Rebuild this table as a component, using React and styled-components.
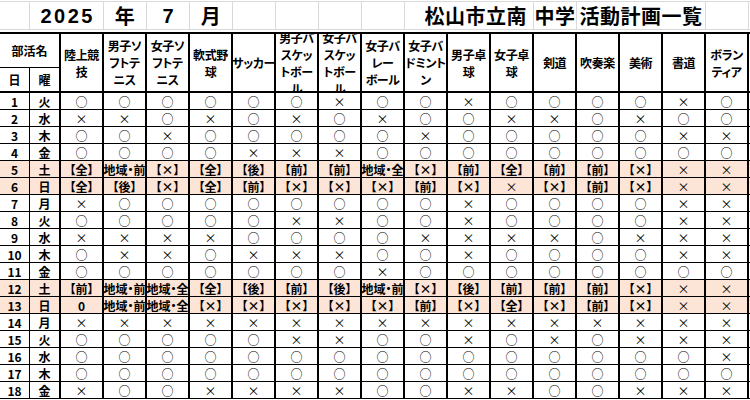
import React from 'react';
import styled, { createGlobalStyle, css } from 'styled-components';

const COLS = '30px 31px repeat(16, 43px)';

const clubs = [
  ['陸上競', '技'],
  ['男子ソ', 'フトテ', 'ニス'],
  ['女子ソ', 'フトテ', 'ニス'],
  ['軟式野', '球'],
  ['サッカー'],
  ['男子バ', 'スケッ', 'トボー', 'ル'],
  ['女子バ', 'スケッ', 'トボー', 'ル'],
  ['女子バ', 'レー', 'ボール'],
  ['女子バ', 'ドミント', 'ン'],
  ['男子卓', '球'],
  ['女子卓', '球'],
  ['剣道'],
  ['吹奏楽'],
  ['美術'],
  ['書道'],
  ['ボラン', 'ティア'],
];

const rows = [
  [1, '火', 'o o o o o o x o o x o o o o x o'],
  [2, '水', 'x x o x o x o x o o x x o x o o'],
  [3, '木', 'o o x o o o o o x o o o o o x x'],
  [4, '金', 'o o o o x x x o o o o o o o o o'],
  [5, '土', '【全】 地域・前 【×】 【全】 【後】 【前】 【前】 地域・全 【×】 【前】 【全】 【前】 【前】 【×】 x x'],
  [6, '日', '【全】 【後】 【×】 【全】 【前】 【×】 【×】 【×】 【前】 【×】 x 【×】 【前】 【×】 x x'],
  [7, '月', 'x o o o o o o o o x o o o o x x'],
  [8, '火', 'o o o o o x x o o x o o o o x x'],
  [9, '水', 'x x x x o o o o x x x x o x x x'],
  [10, '木', 'o x x o x x x o o x o o o o x x'],
  [11, '金', 'o o o o o o o x o o o o o o o o'],
  [12, '土', '【前】 地域・前 地域・全 【全】 【後】 【前】 【後】 地域・前 【×】 【後】 【前】 【前】 【前】 【×】 x x'],
  [13, '日', '0 地域・前 地域・全 【×】 【×】 【×】 【×】 【×】 【前】 【×】 【全】 【×】 【前】 【×】 x x'],
  [14, '月', 'x x x x x x x x x x x x x x x x'],
  [15, '火', 'o o o o o x x o o x o x o x x x'],
  [16, '水', 'o o o o o o o o o o o o o o o x'],
  [17, '木', 'o o o o o o o o o o o o o o o o'],
  [18, '金', 'x o o x x x x o o x x o o x x x'],
];

const weekend = ['土', '日'];

// o / x are the plain marks, anything else is written as is
const markOf = (t) => (t === 'o' ? '○' : t === 'x' ? '×' : t);

const App = () => {
  return (
    <Sheet>
      <GlobalStyle />
      <TitleRow>
        <TitleCell />
        <TitleCell $span={2}><Year>2025</Year></TitleCell>
        <TitleCell><BigText>年</BigText></TitleCell>
        <TitleCell><Year>7</Year></TitleCell>
        <TitleCell><BigText>月</BigText></TitleCell>
        <TitleCell />
        <TitleCell />
        <TitleCell />
        <TitleCell />
        <TitleCell $span={3} $align="flex-end"><BigText>松山市立南</BigText></TitleCell>
        <TitleCell><BigText>中学</BigText></TitleCell>
        <TitleCell $span={3}><BigText>活動計画一覧</BigText></TitleCell>
        <TitleCell />
      </TitleRow>

      <Table>
        <Header>
          <HeadCell $span={2} $under>部活名</HeadCell>
          {clubs.map((lines, i) => (
            <ClubHead key={i}>
              {lines.map((l, j) => <span key={j}>{l}</span>)}
            </ClubHead>
          ))}
          <HeadCell $thin>日</HeadCell>
          <HeadCell>曜</HeadCell>
        </Header>

        {rows.map(([day, wd, marks]) => (
          <Row key={day} $shaded={weekend.includes(wd)}>
            <DayCell $thin>{day}</DayCell>
            <DayCell>{wd}</DayCell>
            {marks.split(' ').map((t, i) => (
              <MarkCell key={i} $plain={t === 'o' || t === 'x'}>{markOf(t)}</MarkCell>
            ))}
          </Row>
        ))}
      </Table>
    </Sheet>
  );
};

export default App;

const GlobalStyle = createGlobalStyle`
  html, body {
    margin: 0;
    padding: 0;
    background: #ffffff;
  }
  body {
    font-family: "Noto Sans CJK JP", "Noto Sans", sans-serif;
    font-feature-settings: "palt";
    color: #000000;
  }
`;

const Sheet = styled.div`
  width: 750px;
  height: 400px;
  overflow: hidden;
  padding-top: 1px;
  box-sizing: border-box;
`;

const TitleRow = styled.div`
  display: grid;
  grid-template-columns: ${COLS};
  height: 29px;
  box-sizing: border-box;
  border-top: 1px solid #d9d9d9;
  border-bottom: 1px solid #d9d9d9;
`;

const TitleCell = styled.div`
  grid-column: span ${props => props.$span || 1};
  display: flex;
  align-items: center;
  justify-content: ${props => props.$align || 'center'};
  padding-right: ${props => (props.$align ? '6px' : '0')};
  border-right: 1px solid #d9d9d9;
  white-space: nowrap;
`;

const Year = styled.span`
  font-family: "Liberation Sans", Arial, sans-serif;
  font-weight: 700;
  font-size: 20px;
  line-height: 20px;
  letter-spacing: 2.5px;
  margin-right: -2.5px;
`;

const BigText = styled.span`
  font-weight: 700;
  font-size: 20px;
  line-height: 20px;
  letter-spacing: 0.5px;
`;

const Table = styled.div`
  margin-top: 2px;
`;

const Header = styled.div`
  display: grid;
  grid-template-columns: ${COLS};
  grid-template-rows: 34px 23px;
  grid-auto-flow: column dense;
  border-top: 2px solid #000;
  border-bottom: 2px solid #000;
`;

const HeadCell = styled.div`
  grid-column: span ${props => props.$span || 1};
  display: flex;
  align-items: center;
  justify-content: center;
  font-size: 12px;
  line-height: 14px;
  font-weight: 700;
  border-right: ${props => (props.$thin ? '1px' : '2px')} solid #000;
  box-sizing: border-box;

  ${props => props.$under && css`
    grid-row: 1;
    border-bottom: 1px solid #000;
  `}
`;

const ClubHead = styled.div`
  grid-row: 1 / span 2;
  display: flex;
  flex-direction: column;
  align-items: center;
  justify-content: center;
  overflow: hidden;
  font-size: 12px;
  font-weight: 700;
  line-height: 17px;
  letter-spacing: -0.4px;
  white-space: nowrap;
  border-right: 2px solid #000;
`;

const Row = styled.div`
  display: grid;
  grid-template-columns: ${COLS};
  height: 17px;
  box-sizing: border-box;
  border-bottom: 1px solid #000;
  background: ${props => (props.$shaded ? '#fce4d6' : '#ffffff')};
`;

const Cell = styled.div`
  display: flex;
  align-items: center;
  justify-content: center;
  overflow: hidden;
  white-space: nowrap;
  font-size: 12px;
  line-height: 13px;
  border-right: ${props => (props.$thin ? '1px' : '2px')} solid #000;
`;

const DayCell = styled(Cell)`
  font-weight: 700;
`;

const MarkCell = styled(Cell)`
  font-weight: ${props => (props.$plain ? 400 : 700)};
`;
